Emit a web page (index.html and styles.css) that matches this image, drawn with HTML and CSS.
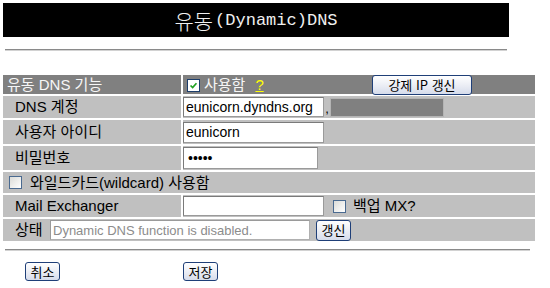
FILE: index.html
```html
<!DOCTYPE html>
<html lang="ko">
<head>
<meta charset="utf-8">
<title>유동(Dynamic)DNS</title>
<link rel="stylesheet" href="styles.css">
</head>
<body>
<div class="page">
  <div class="head">
    <h1 class="title"><span class="title-ko">유동</span>(Dynamic)DNS</h1>
    <hr class="rule rule-top">
  </div>

  <div class="form">
    <div class="cell dark lbl-main">유동 DNS 기능</div>
    <div class="cell dark ctl-main">
      <div class="use">
        <span class="cb cb-on"><svg viewBox="0 0 13 13" width="13" height="13"><path d="M3 6.5 L5.5 9 L10 3.8" fill="none" stroke="#21a121" stroke-width="2"/></svg></span>
        <span class="use-text">사용함</span>
        <span class="help">?</span>
      </div>
      <button class="btn btn-force" type="button">강제 IP 갱신</button>
    </div>

    <div class="cell lbl">DNS 계정</div>
    <div class="cell ctl">
      <input class="txt txt-host" type="text" value="eunicorn.dyndns.org">
      <span class="comma">,</span>
      <input class="txt txt-dis" type="text" disabled>
    </div>

    <div class="cell lbl">사용자 아이디</div>
    <div class="cell ctl">
      <input class="txt txt-user" type="text" value="eunicorn">
    </div>

    <div class="cell lbl">비밀번호</div>
    <div class="cell ctl">
      <input class="txt txt-pass" type="password" value="abcde">
    </div>

    <div class="cell wide row-wild">
      <span class="cb cb-off"></span>
      <span class="wild-text">와일드카드(wildcard) 사용함</span>
    </div>

    <div class="cell lbl">Mail Exchanger</div>
    <div class="cell ctl">
      <input class="txt txt-mx" type="text">
      <span class="cb cb-off cb-mx"></span>
      <span class="mx-text">백업 MX?</span>
    </div>

    <div class="cell wide row-status">
      <span class="status-label">상태</span>
      <input class="txt txt-status" type="text" value="Dynamic DNS function is disabled." disabled>
      <button class="btn btn-small btn-refresh" type="button">갱신</button>
    </div>
  </div>

  <hr class="rule rule-bottom">

  <div class="actions">
    <div class="act-cell act-first"><button class="btn btn-small" type="button">취소</button></div>
    <div class="act-cell"><button class="btn btn-small" type="button">저장</button></div>
  </div>
</div>
</body>
</html>
```

FILE: styles.css
```css
html, body {
  margin: 0;
  padding: 0;
  background: #ffffff;
}

body {
  font-family: "Liberation Sans", "Noto Sans CJK KR", sans-serif;
  color: #000;
}

.page {
  padding: 3px 3px 0 3px;
}

.head {
  width: 506px;
}

.title {
  margin: 0;
  height: 34px;
  background: #000;
  color: #f0f0f0;
  font-family: "Liberation Mono", "Noto Sans CJK KR", monospace;
  font-size: 17px;
  font-weight: normal;
  display: flex;
  align-items: center;
  justify-content: center;
  line-height: 1;
  padding-top: 1px;
  box-sizing: border-box;
}

.title-ko {
  font-family: "Noto Sans CJK KR", sans-serif;
  font-size: 21px;
  font-weight: 300;
  margin-right: 2px;
}

.rule {
  display: block;
  height: 0;
  border: 0;
  border-top: 1px solid #8a8a8a;
  border-bottom: 1px solid #d2d2d2;
}

.rule-top {
  margin: 12px 2px 0 2px;
}

.rule-bottom {
  width: 525px;
  margin: 8px 0 0 2px;
}

.form {
  margin-top: 24px;
  width: 532px;
  display: grid;
  grid-template-columns: 178px 352px;
  grid-template-rows: 19px 22px 24px 24px 21px 22px 22px;
  gap: 2px;
}

.cell {
  background: #c0c0c0;
  display: flex;
  align-items: center;
  font-size: 15px;
  line-height: 1.2;
  white-space: nowrap;
  box-sizing: border-box;
}

.cell.dark {
  background: #808080;
  color: #f6f6f6;
}

.lbl-main {
  padding-left: 4px;
}

.lbl {
  padding-left: 12px;
}

.ctl-main {
  display: grid;
  grid-template-columns: 189px auto;
  align-items: center;
}

.use {
  display: flex;
  align-items: center;
  padding-left: 4px;
}

.use-text {
  margin-left: 4px;
  font-size: 15px;
}

.help {
  margin-left: 10px;
  color: #ffff00;
  text-decoration: underline;
  font-size: 15px;
}

.wide {
  grid-column: 1 / -1;
}

.cb {
  display: inline-flex;
  width: 13px;
  height: 13px;
  box-sizing: border-box;
  flex: none;
}

.cb svg {
  display: block;
  width: 11px;
  height: 11px;
}

.cb-on {
  background: #ffffff;
  border: 1px solid #1c3d6b;
}

.cb-off {
  border: 1px solid #4a6a90;
  background: linear-gradient(135deg, #dcdcd8, #ffffff);
}

.row-wild {
  padding-left: 6px;
}

.wild-text {
  margin-left: 8px;
}

.txt {
  box-sizing: border-box;
  height: 20px;
  margin: 0;
  padding: 0 2px;
  border: 1px solid #9a9a9a;
  border-top-color: #7a7a7a;
  border-left-color: #7a7a7a;
  background: #ffffff;
  font-family: "Liberation Sans", "Noto Sans CJK KR", sans-serif;
  font-size: 14px;
  color: #000;
  outline: none;
}

.txt-host {
  width: 141px;
}

.comma {
  width: 6px;
  font-size: 13px;
  text-align: center;
  align-self: flex-end;
  padding-bottom: 1px;
}

.txt-dis {
  width: 114px;
  height: 19px;
  background: #808080;
  border: 1px solid #b4b4b4;
}

.txt-user {
  width: 141px;
  height: 21px;
}

.txt-pass {
  width: 135px;
  height: 22px;
  font-size: 14px;
  letter-spacing: 0;
  padding-left: 4px;
}

.txt-mx {
  width: 141px;
}

.cb-mx {
  margin-left: 9px;
}

.mx-text {
  margin-left: 7px;
}

.row-status {
  padding-left: 12px;
}

.status-label {
  width: 35px;
}

.txt-status {
  width: 260px;
  height: 20px;
  font-size: 13px;
  color: #8c8c8c;
  border-color: #b0b0b0;
  border-top-color: #9a9a9a;
  border-left-color: #9a9a9a;
}

.btn {
  box-sizing: border-box;
  height: 20px;
  margin: 0;
  padding: 0 3px;
  border: 1px solid #1f3f78;
  border-radius: 3px;
  background: linear-gradient(#ffffff, #eef0f6 45%, #d6dceb);
  font-family: "Noto Sans CJK KR", sans-serif;
  font-size: 13px;
  line-height: 16px;
  color: #000;
  white-space: nowrap;
}

.btn-force {
  width: 100px;
}

.btn-small {
  width: 35px;
  padding: 0;
}

.btn-refresh {
  margin-left: 6px;
  height: 21px;
}

.actions {
  margin-top: 11px;
  display: grid;
  grid-template-columns: 180px auto;
}

.act-first {
  padding-left: 22px;
}

.act-cell .btn {
  height: 19px;
}
```
